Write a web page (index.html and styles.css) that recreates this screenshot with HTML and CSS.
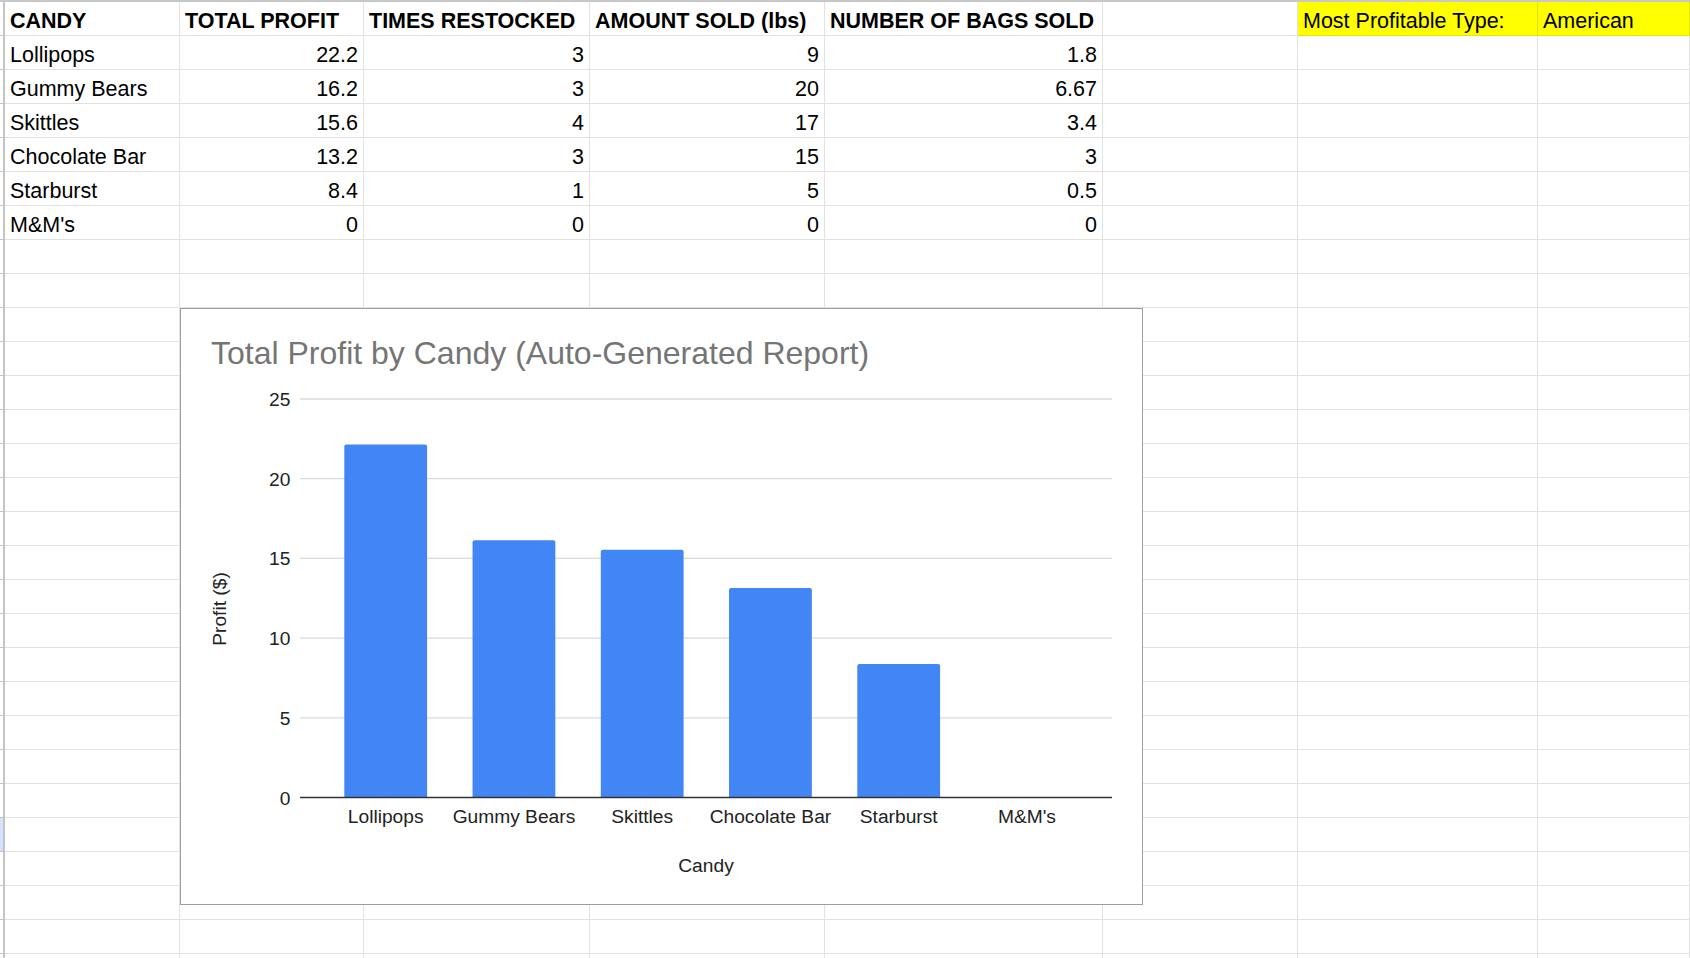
FILE: index.html
```html
<!DOCTYPE html>
<html lang="en">

<head>
    <meta charset="UTF-8">
    <title>Candy Sales</title>
    <link rel="stylesheet" href="styles.css">
</head>

<body>
    <div class="sheet">
        <div class="row">
            <span class="rh"></span>
            <span class="cell head">CANDY</span>
            <span class="cell head">TOTAL PROFIT</span>
            <span class="cell head">TIMES RESTOCKED</span>
            <span class="cell head">AMOUNT SOLD (lbs)</span>
            <span class="cell head">NUMBER OF BAGS SOLD</span>
            <span class="cell"></span>
            <span class="cell hilite">Most Profitable Type:</span>
            <span class="cell hilite">American</span>
        </div>
        <div class="row">
            <span class="rh"></span>
            <span class="cell">Lollipops</span>
            <span class="cell num">22.2</span>
            <span class="cell num">3</span>
            <span class="cell num">9</span>
            <span class="cell num">1.8</span>
            <span class="cell"></span><span class="cell"></span><span class="cell"></span>
        </div>
        <div class="row">
            <span class="rh"></span>
            <span class="cell">Gummy Bears</span>
            <span class="cell num">16.2</span>
            <span class="cell num">3</span>
            <span class="cell num">20</span>
            <span class="cell num">6.67</span>
            <span class="cell"></span><span class="cell"></span><span class="cell"></span>
        </div>
        <div class="row">
            <span class="rh"></span>
            <span class="cell">Skittles</span>
            <span class="cell num">15.6</span>
            <span class="cell num">4</span>
            <span class="cell num">17</span>
            <span class="cell num">3.4</span>
            <span class="cell"></span><span class="cell"></span><span class="cell"></span>
        </div>
        <div class="row">
            <span class="rh"></span>
            <span class="cell">Chocolate Bar</span>
            <span class="cell num">13.2</span>
            <span class="cell num">3</span>
            <span class="cell num">15</span>
            <span class="cell num">3</span>
            <span class="cell"></span><span class="cell"></span><span class="cell"></span>
        </div>
        <div class="row">
            <span class="rh"></span>
            <span class="cell">Starburst</span>
            <span class="cell num">8.4</span>
            <span class="cell num">1</span>
            <span class="cell num">5</span>
            <span class="cell num">0.5</span>
            <span class="cell"></span><span class="cell"></span><span class="cell"></span>
        </div>
        <div class="row">
            <span class="rh"></span>
            <span class="cell">M&amp;M's</span>
            <span class="cell num">0</span>
            <span class="cell num">0</span>
            <span class="cell num">0</span>
            <span class="cell num">0</span>
            <span class="cell"></span><span class="cell"></span><span class="cell"></span>
        </div>
        <!-- empty rows below the data -->
        <div id="blankRows"></div>

        <div class="chart">
            <svg width="961" height="595" viewBox="0 0 961 595">
                <text class="chart-title" x="30" y="55">Total Profit by Candy (Auto-Generated Report)</text>

                <g class="gridlines">
                    <line x1="119" x2="931" y1="90" y2="90"></line>
                    <line x1="119" x2="931" y1="169.7" y2="169.7"></line>
                    <line x1="119" x2="931" y1="249.4" y2="249.4"></line>
                    <line x1="119" x2="931" y1="329.1" y2="329.1"></line>
                    <line x1="119" x2="931" y1="408.8" y2="408.8"></line>
                </g>

                <g class="axis-label y-labels">
                    <text x="109.4" y="97">25</text>
                    <text x="109.4" y="176.7">20</text>
                    <text x="109.4" y="256.4">15</text>
                    <text x="109.4" y="336.1">10</text>
                    <text x="109.4" y="415.8">5</text>
                    <text x="109.4" y="495.5">0</text>
                </g>

                <g class="bars">
                    <path d="M163.3 488.5 V137.6 Q163.3 135.6 165.3 135.6 H244.1 Q246.1 135.6 246.1 137.6 V488.5 Z"></path>
                    <path d="M291.55 488.5 V233.3 Q291.55 231.3 293.55 231.3 H372.35 Q374.35 231.3 374.35 233.3 V488.5 Z"></path>
                    <path d="M419.8 488.5 V242.8 Q419.8 240.8 421.8 240.8 H500.6 Q502.6 240.8 502.6 242.8 V488.5 Z"></path>
                    <path d="M548.05 488.5 V281.1 Q548.05 279.1 550.05 279.1 H628.85 Q630.85 279.1 630.85 281.1 V488.5 Z"></path>
                    <path d="M676.3 488.5 V357.1 Q676.3 355.1 678.3 355.1 H757.1 Q759.1 355.1 759.1 357.1 V488.5 Z"></path>
                </g>

                <line class="baseline" x1="119" x2="931" y1="488.5" y2="488.5"></line>

                <g class="axis-label x-labels">
                    <text x="204.7" y="513.7">Lollipops</text>
                    <text x="332.95" y="513.7">Gummy Bears</text>
                    <text x="461.2" y="513.7">Skittles</text>
                    <text x="589.45" y="513.7">Chocolate Bar</text>
                    <text x="717.7" y="513.7">Starburst</text>
                    <text x="845.95" y="513.7">M&amp;M's</text>
                </g>

                <text class="axis-label axis-title" x="525" y="562.7">Candy</text>
                <text class="axis-label axis-title" transform="translate(45.4 300) rotate(-90)">Profit ($)</text>
            </svg>
        </div>
    </div>

    <script>
        'use strict';
        // fill the rest of the sheet with empty rows
        const blank = document.querySelector("#blankRows");
        let html = "";
        for (let i = 0; i < 22; i++) {
            let rowHeader = (i === 17) ? '<span class="rh picked"></span>' : '<span class="rh"></span>';
            html += '<div class="row">' + rowHeader + '<span class="cell"></span>'.repeat(8) + '</div>';
        }
        blank.innerHTML = html;
    </script>
</body>

</html>
```

FILE: styles.css
```css
html, body {
    margin: 0;
    background-color: #ffffff;
    overflow: hidden;
}

body {
    font-family: "Liberation Sans", Arial, sans-serif;
    color: #000000;
}

.sheet {
    position: relative;
    height: 958px;
    border-top: 2px solid #c8c8c8;
}

.row {
    display: grid;
    grid-template-columns: 5px 175px 184px 226px 235px 278px 195px 240px 1fr;
    height: 34px;
}

.rh {
    box-sizing: border-box;
    border-right: 2px solid #c4c4c4;
    border-bottom: 1px solid #c4c4c4;
}

.rh.picked {
    background-color: #d3e3fd;
}

.cell {
    box-sizing: border-box;
    display: flex;
    align-items: flex-end;
    padding: 0 5px 2px 5px;
    border-right: 1px solid #e2e2e2;
    border-bottom: 1px solid #e2e2e2;
    font-size: 21.5px;
    line-height: 24px;
    white-space: nowrap;
    overflow: hidden;
}

.head {
    font-weight: bold;
}

.num {
    justify-content: flex-end;
}

.hilite {
    background-color: #ffff00;
    border-right-color: #e4e400;
    border-bottom-color: #e4e400;
}

#blankRows {
    display: block;
}

.chart {
    position: absolute;
    left: 180px;
    top: 306px;
    width: 963px;
    height: 597px;
    box-sizing: border-box;
    border: 1px solid #9e9e9e;
    background-color: #ffffff;
}

.chart svg {
    display: block;
    font-family: "Liberation Sans", Arial, sans-serif;
}

.chart-title {
    font-size: 32px;
    fill: #757575;
}

.gridlines line {
    stroke: #dadada;
    stroke-width: 1.3;
}

.baseline {
    stroke: #333333;
    stroke-width: 1.6;
}

.bars path {
    fill: #4285f4;
}

.axis-label {
    font-size: 19.2px;
    fill: #222222;
}

.y-labels text {
    text-anchor: end;
}

.x-labels text,
.axis-title {
    text-anchor: middle;
}
```
